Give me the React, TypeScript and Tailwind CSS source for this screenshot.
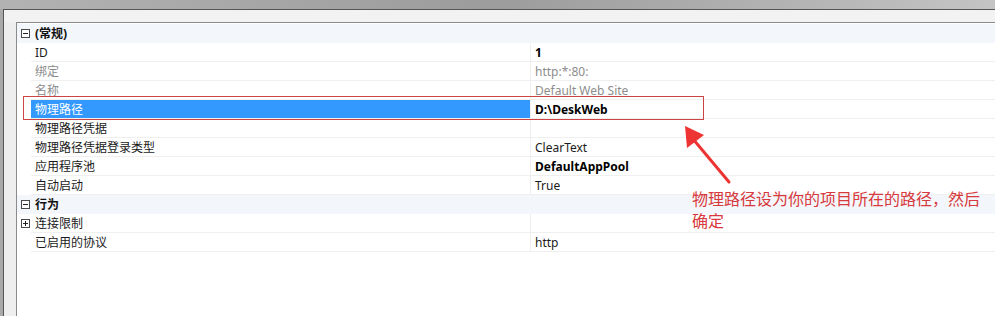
import React from "react";

type Row =
  | { kind: "cat"; label: string; open: boolean }
  | { kind: "prop"; label: string; value?: string; bold?: boolean; muted?: boolean; selected?: boolean; expander?: boolean };

const rows: Row[] = [
  { kind: "cat", label: "(常规)", open: true },
  { kind: "prop", label: "ID", value: "1", bold: true },
  { kind: "prop", label: "绑定", value: "http:*:80:", muted: true },
  { kind: "prop", label: "名称", value: "Default Web Site", muted: true },
  { kind: "prop", label: "物理路径", value: "D:\\DeskWeb", bold: true, selected: true },
  { kind: "prop", label: "物理路径凭据", value: "" },
  { kind: "prop", label: "物理路径凭据登录类型", value: "ClearText" },
  { kind: "prop", label: "应用程序池", value: "DefaultAppPool", bold: true },
  { kind: "prop", label: "自动启动", value: "True" },
  { kind: "cat", label: "行为", open: true },
  { kind: "prop", label: "连接限制", value: "", expander: true },
  { kind: "prop", label: "已启用的协议", value: "http" },
];

function Toggle({ open }: { open: boolean }) {
  return (
    <svg width="9" height="9" viewBox="0 0 9 9" className="block">
      <rect x="0.5" y="0.5" width="8" height="8" fill="white" stroke="#4a4a4a" />
      <line x1="2" y1="4.5" x2="7" y2="4.5" stroke="#222" />
      {!open && <line x1="4.5" y1="2" x2="4.5" y2="7" stroke="#222" />}
    </svg>
  );
}

function GridRow({ row }: { row: Row }) {
  if (row.kind === "cat") {
    return (
      <div className="flex h-[19px] items-center bg-[#f3f6fb]">
        <div className="flex w-[14px] justify-center pl-[2px]">
          <Toggle open={row.open} />
        </div>
        <span className="pl-[4px] pt-px font-bold text-[#111]">{row.label}</span>
      </div>
    );
  }
  return (
    <div className="flex h-[19px]">
      <div className="flex w-[14px] items-center justify-center pl-[2px]">
        {row.expander && <Toggle open={false} />}
      </div>
      <div
        className={`flex w-[499px] items-center border-b border-[#efefef] pl-[4px] pt-px ${
          row.selected ? "bg-[#3399ff] text-white" : row.muted ? "text-[#8d8d8d]" : "text-[#1a1a1a]"
        }`}
      >
        {row.label}
      </div>
      <div
        className={`flex flex-1 items-center border-b border-l border-[#efefef] pl-[4px] pt-px ${
          row.bold ? "font-bold text-black" : row.muted ? "text-[#8d8d8d]" : "text-[#1a1a1a]"
        }`}
      >
        {row.value}
      </div>
    </div>
  );
}

export default function App() {
  return (
    <div className="relative flex h-[316px] w-[995px] flex-col overflow-hidden bg-[#a9a9a9] font-['Noto_Sans','Noto_Sans_CJK_SC',sans-serif] text-[12px] leading-none">
      <div className="h-[9px] bg-gradient-to-r from-[#b2b2b2] via-[#9c9c9c] to-[#c4c4c4]" />
      <div className="flex flex-1 pl-[3px]">
        <div className="flex flex-1 flex-col border-l border-t border-[#555] bg-[#eeeeee]">
          <div className="h-[12px] bg-[#f2f2f2]" />
          <div className="flex flex-1 pl-[12px]">
            <div className="flex-1 border-l border-t border-[#8a8a8a] bg-white pt-px">
              {rows.map((r, i) => (
                <GridRow key={i} row={r} />
              ))}
            </div>
          </div>
        </div>
      </div>

      {/* annotation */}
      <div className="absolute left-[23px] top-[96px] h-[24px] w-[681px] border border-[#cc4444]" />
      <svg className="absolute left-0 top-0" width="995" height="316">
        <line x1="729" y1="182" x2="693" y2="139" stroke="#ee3333" strokeWidth="3" strokeLinecap="round" />
        <polygon points="685,126 687,148 704,135" fill="#ee3333" />
      </svg>
      <div className="absolute left-[692px] top-[187px] text-[16px] leading-[22px] text-[#d8393c] font-['Noto_Sans_CJK_SC',sans-serif]">
        物理路径设为你的项目所在的路径，然后
        <br />
        确定
      </div>
    </div>
  );
}
